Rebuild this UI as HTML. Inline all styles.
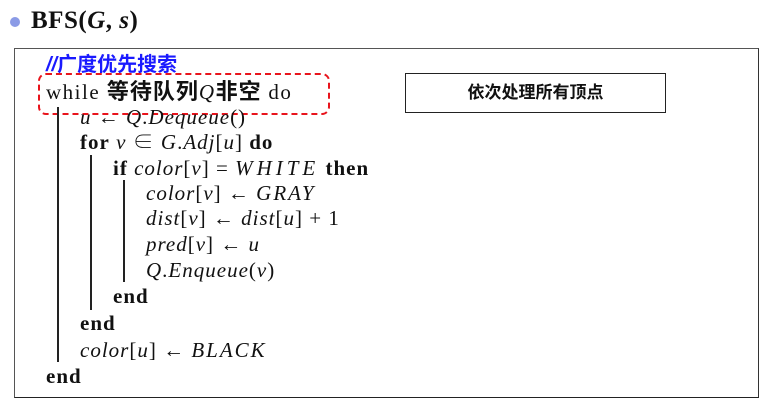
<!DOCTYPE html>
<html><head><meta charset="utf-8"><style>
body{margin:0;width:762px;height:401px;background:#fff;position:relative;overflow:hidden;font-family:"Liberation Serif","Noto Serif CJK SC",serif;color:#111}
.a{position:absolute;white-space:nowrap;font-size:21px;line-height:22px;letter-spacing:1px}
i{font-style:italic}
b{font-weight:bold}
.cj{font-family:"Liberation Sans","Noto Sans CJK SC",sans-serif;letter-spacing:0}
.bar{position:absolute;width:1.5px;background:#222}
</style></head><body>
<div style="position:absolute;left:10px;top:17px;width:10px;height:10px;border-radius:50%;background:#8b9be6"></div>
<div class="a" style="left:31px;top:7px;font-size:25px;line-height:28px;font-weight:bold;letter-spacing:0.5px">BFS(<i>G</i>, <i>s</i>)</div>
<div style="position:absolute;left:14px;top:48px;width:743px;height:348px;border:1.5px solid #555;border-bottom-color:#222;border-right-color:#333"></div>
<div style="position:absolute;left:405px;top:73px;width:259px;height:38px;border:1.5px solid #222"></div>
<div class="a cj" style="left:405px;top:82px;width:261px;text-align:center;font-size:17px;font-weight:bold">依次处理所有顶点</div>
<div class="a cj" style="left:46px;top:54px;color:#1a1aff;font-size:20px;font-weight:bold"><i>//</i>广度优先搜索</div>
<div style="position:absolute;left:38px;top:73px;width:288px;height:38px;border:2.5px dashed #e8141c;border-radius:8px"></div>
<div class="a" style="left:46px;top:81px;letter-spacing:1.5px">while <span class="cj" style="font-size:22px;font-weight:bold;letter-spacing:1px">等待队列</span><i>Q</i><span class="cj" style="font-size:22px;font-weight:bold;letter-spacing:1px">非空</span> do</div>
<div class="a" style="left:80px;top:106px"><i>u</i> ← <i>Q</i>.<i>Dequeue</i>()</div>
<div class="a" style="left:80px;top:131px"><b>for</b> <i>v</i> ∈ <i>G</i>.<i>Adj</i>[<i>u</i>] <b>do</b></div>
<div class="a" style="left:113px;top:157px"><b>if</b> <i>color</i>[<i>v</i>] = <i style="letter-spacing:4px">WHITE</i> <b>then</b></div>
<div class="a" style="left:146px;top:182px"><i>color</i>[<i>v</i>] ← <i style="letter-spacing:2px">GRAY</i></div>
<div class="a" style="left:146px;top:207px"><i>dist</i>[<i>v</i>] ← <i>dist</i>[<i>u</i>] + 1</div>
<div class="a" style="left:146px;top:233px"><i>pred</i>[<i>v</i>] ← <i>u</i></div>
<div class="a" style="left:146px;top:259px"><i>Q</i>.<i>Enqueue</i>(<i>v</i>)</div>
<div class="a" style="left:113px;top:285px"><b>end</b></div>
<div class="a" style="left:80px;top:312px"><b>end</b></div>
<div class="a" style="left:80px;top:339px"><i>color</i>[<i>u</i>] ← <i style="letter-spacing:2px">BLACK</i></div>
<div class="a" style="left:46px;top:365px"><b>end</b></div>
<div class="bar" style="left:57px;top:107px;height:255px"></div>
<div class="bar" style="left:90px;top:155px;height:155px"></div>
<div class="bar" style="left:123px;top:180px;height:102px"></div>
</body></html>
